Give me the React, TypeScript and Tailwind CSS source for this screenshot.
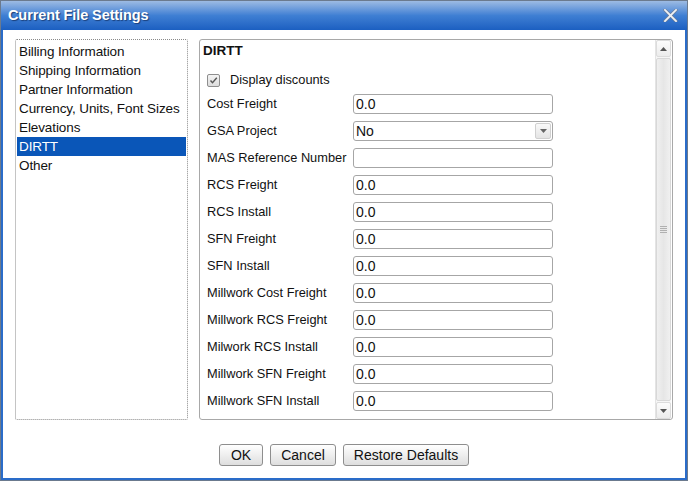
import React from 'react';

const sections = [
  'Billing Information',
  'Shipping Information',
  'Partner Information',
  'Currency, Units, Font Sizes',
  'Elevations',
  'DIRTT',
  'Other',
];

const fields: { label: string; value: string; select?: boolean }[] = [
  { label: 'Cost Freight', value: '0.0' },
  { label: 'GSA Project', value: 'No', select: true },
  { label: 'MAS Reference Number', value: '' },
  { label: 'RCS Freight', value: '0.0' },
  { label: 'RCS Install', value: '0.0' },
  { label: 'SFN Freight', value: '0.0' },
  { label: 'SFN Install', value: '0.0' },
  { label: 'Millwork Cost Freight', value: '0.0' },
  { label: 'Millwork RCS Freight', value: '0.0' },
  { label: 'Milwork RCS Install', value: '0.0' },
  { label: 'Millwork SFN Freight', value: '0.0' },
  { label: 'Millwork SFN Install', value: '0.0' },
];

function Button({ children, w }: { children: React.ReactNode; w: string }) {
  return (
    <button
      className={`${w} h-[22px] rounded-[3px] border border-[#8e8e8e] bg-gradient-to-b from-[#ffffff] to-[#dedede] text-[14px] text-[#111] leading-none`}
    >
      {children}
    </button>
  );
}

export default function App() {
  return (
    <div
      className="w-[688px] h-[481px] flex flex-col bg-[#2a6cc9] border border-[#6b7a8e] overflow-hidden"
      style={{ fontFamily: '"Liberation Sans", Arial, sans-serif' }}
    >
      {/* title bar */}
      <div className="h-[29px] shrink-0 flex items-center justify-between px-[7px] bg-gradient-to-b from-[#9dbbe3] via-[#3f7fd3] to-[#1b5fc1]">
        <span className="text-white font-bold text-[14.5px] tracking-[-0.1px] [text-shadow:1px_1px_1px_#1a3f7a]">
          Current File Settings
        </span>
        <svg width="15" height="13" viewBox="0 0 16 14" className="mr-[2px]">
          <path d="M2 1 L14 13 M14 1 L2 13" stroke="#6f7f96" strokeWidth="3.4" strokeLinecap="round" />
          <path d="M2 1 L14 13 M14 1 L2 13" stroke="#eef1f6" strokeWidth="2" strokeLinecap="round" />
        </svg>
      </div>

      {/* body */}
      <div className="flex-1 mx-[2px] mb-[2px] bg-white flex flex-col px-[12px] pt-[9px]">
        <div className="flex gap-[11px] h-[381px]">
          {/* section list */}
          <div className="w-[173px] border border-dotted border-[#8a8a8a] rounded-[2px] py-[2px] px-[1px]">
            {sections.map((s) => (
              <div
                key={s}
                className={`h-[19px] leading-[19px] pl-[2px] text-[13.5px] tracking-[-0.1px] ${
                  s === 'DIRTT' ? 'bg-[#0a56b8] text-white' : 'text-[#111]'
                }`}
              >
                {s}
              </div>
            ))}
          </div>

          {/* settings panel */}
          <div className="w-[474px] border border-[#a8a8a8] rounded-[3px] flex">
            <div className="flex-1 pl-[3px] pt-[3px]">
              <div className="font-bold text-[13.5px] text-[#111] h-[16px] leading-[16px]">DIRTT</div>
              <div className="flex items-center h-[26px] mt-[8px] pl-[4px]">
                <div className="w-[13px] h-[13px] border border-[#8e8e8e] rounded-[2px] bg-gradient-to-b from-[#f4f4f4] to-[#dcdcdc] flex items-center justify-center">
                  <svg width="9" height="9" viewBox="0 0 9 9">
                    <path d="M1.5 4.5 L3.5 6.8 L7.8 1.8" stroke="#555" strokeWidth="1.4" fill="none" />
                  </svg>
                </div>
                <span className="ml-[10px] text-[12.8px] text-[#111]">Display discounts</span>
              </div>
              <div className="flex flex-col gap-[7px] mt-[1px] pl-[4px]">
                {fields.map((f) => (
                  <div key={f.label} className="flex items-center h-[20px]">
                    <span className="w-[146px] text-[12.8px] text-[#111]">{f.label}</span>
                    <div className="w-[200px] h-[20px] border border-[#a6a6a6] rounded-[3px] flex items-center bg-white">
                      <span className="flex-1 pl-[2px] text-[14px] text-[#111] leading-none">{f.value}</span>
                      {f.select && (
                        <div className="w-[16px] h-[16px] mr-[1px] border border-[#d0d0d0] rounded-[2px] bg-gradient-to-b from-[#fafafa] to-[#e4e4e4] flex items-center justify-center">
                          <svg width="7" height="4" viewBox="0 0 7 4">
                            <path d="M0 0 L7 0 L3.5 4 Z" fill="#666" />
                          </svg>
                        </div>
                      )}
                    </div>
                  </div>
                ))}
              </div>
            </div>

            {/* scrollbar */}
            <div className="w-[16px] mr-[1px] flex flex-col border-l border-[#e4e4e4] bg-[#f6f6f6]">
              <div className="h-[17px] border border-[#dcdcdc] rounded-[2px] bg-gradient-to-b from-[#fcfcfc] to-[#ececec] flex items-center justify-center">
                <svg width="7" height="4" viewBox="0 0 7 4">
                  <path d="M0 4 L7 4 L3.5 0 Z" fill="#555" />
                </svg>
              </div>
              <div className="flex-1 my-[1px] border border-[#d8d8d8] rounded-[2px] bg-gradient-to-r from-[#f0f0f0] via-[#e6e6e6] to-[#f0f0f0] flex items-center justify-center">
                <div className="flex flex-col gap-[1px]">
                  <div className="w-[7px] h-[1px] bg-[#b0b0b0]" />
                  <div className="w-[7px] h-[1px] bg-[#b0b0b0]" />
                  <div className="w-[7px] h-[1px] bg-[#b0b0b0]" />
                  <div className="w-[7px] h-[1px] bg-[#b0b0b0]" />
                </div>
              </div>
              <div className="h-[17px] border border-[#dcdcdc] rounded-[2px] bg-gradient-to-b from-[#fcfcfc] to-[#ececec] flex items-center justify-center">
                <svg width="7" height="4" viewBox="0 0 7 4">
                  <path d="M0 0 L7 0 L3.5 4 Z" fill="#555" />
                </svg>
              </div>
            </div>
          </div>
        </div>

        {/* buttons */}
        <div className="flex justify-center gap-[7px] mt-[24px]">
          <Button w="w-[44px]">OK</Button>
          <Button w="w-[66px]">Cancel</Button>
          <Button w="w-[126px]">Restore Defaults</Button>
        </div>
      </div>
    </div>
  );
}
